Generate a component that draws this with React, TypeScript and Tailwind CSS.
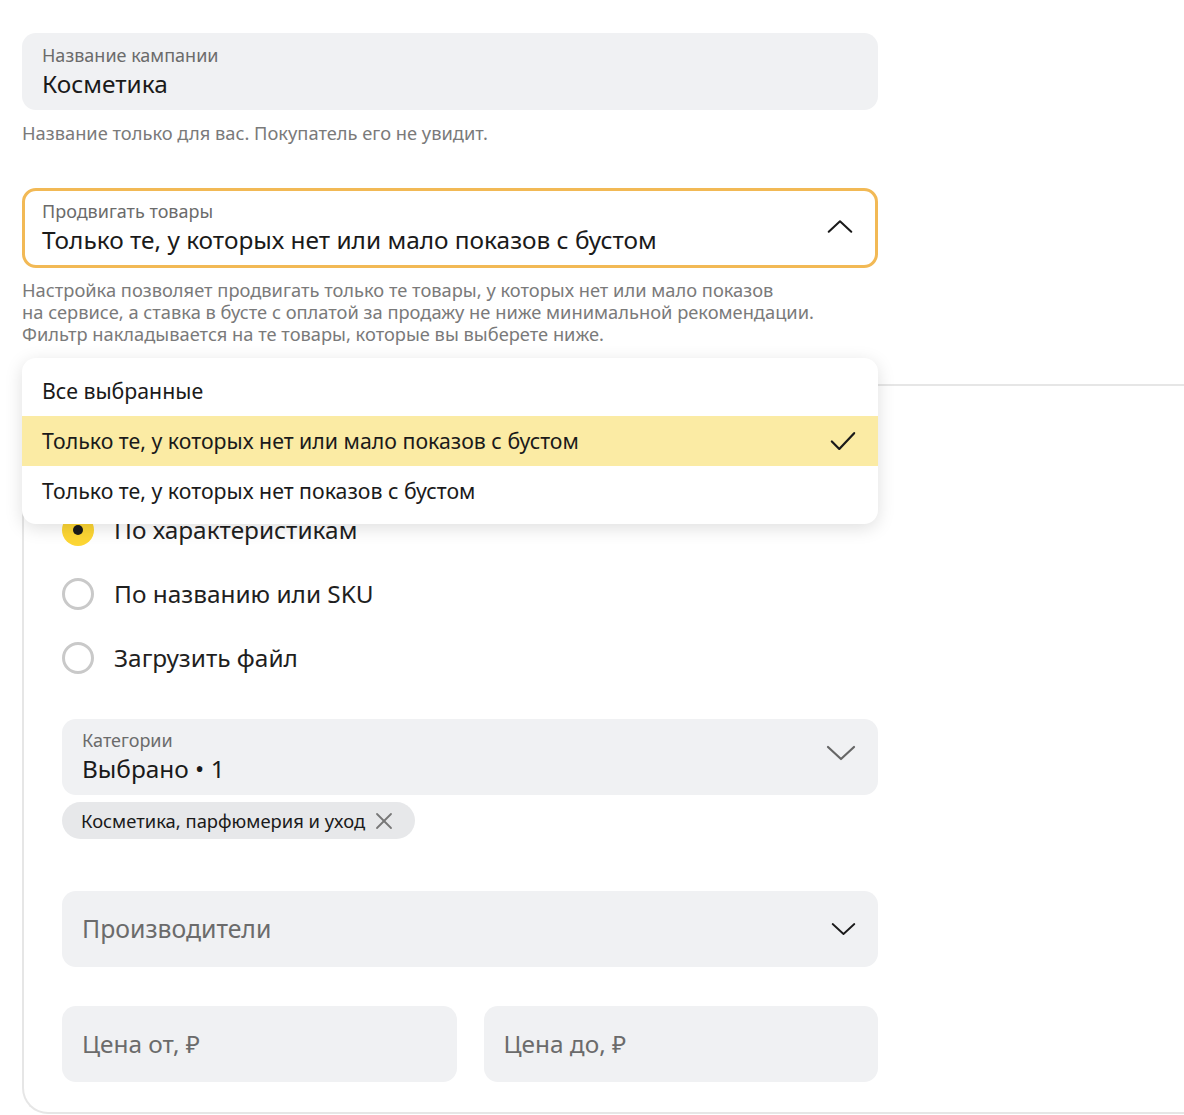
import React from "react";

const font = { fontFamily: '"Noto Sans", "Liberation Sans", sans-serif' };

function ChevronDown({ className }: { className?: string }) {
  return (
    <svg viewBox="0 0 30 16" className={className} fill="none" stroke="currentColor" strokeWidth="2.2" strokeLinecap="round" strokeLinejoin="round">
      <polyline points="2,2 15,14 28,2" />
    </svg>
  );
}

function ChevronUp({ className }: { className?: string }) {
  return (
    <svg viewBox="0 0 30 16" className={className} fill="none" stroke="currentColor" strokeWidth="2.4" strokeLinecap="round" strokeLinejoin="round">
      <polyline points="2,14 15,2 28,14" />
    </svg>
  );
}

function Check({ className }: { className?: string }) {
  return (
    <svg viewBox="0 0 28 22" className={className} fill="none" stroke="currentColor" strokeWidth="2.4" strokeLinecap="round" strokeLinejoin="round">
      <polyline points="2,11 10,19 26,2" />
    </svg>
  );
}

function Radio({ label, checked }: { label: string; checked?: boolean }) {
  return (
    <div className="flex h-8 items-center gap-[20px]">
      {checked ? (
        <span className="flex h-8 w-8 items-center justify-center rounded-full bg-[#fdd634]">
          <span className="h-[10px] w-[10px] rounded-full bg-[#1a1a1a]" />
        </span>
      ) : (
        <span className="h-8 w-8 rounded-full border-[3px] border-[#c9c9c9]" />
      )}
      <span className="text-[24.4px] leading-8 text-[#1f1f1f]">{label}</span>
    </div>
  );
}

export default function App() {
  return (
    <div className="relative h-[1115px] w-[1184px] overflow-hidden bg-white" style={font}>
      <div className="pl-[22px] pt-[33px]">
        <div className="w-[856px]">
          {/* campaign name */}
          <div className="flex h-[77px] flex-col justify-center rounded-[14px] bg-[#f0f1f3] px-[20px]">
            <div className="text-[18px] leading-[22px] text-[#6b6b6b]">Название кампании</div>
            <div className="mt-[2px] text-[24.4px] leading-[32px] text-[#1a1a1a]">Косметика</div>
          </div>
          <p className="mt-[12px] text-[18.3px] leading-[22px] text-[#7a7a7a]">
            Название только для вас. Покупатель его не увидит.
          </p>

          {/* promote select */}
          <div className="relative mt-[44px]">
            <div className="flex h-[80px] items-center justify-between rounded-[14px] border-[3px] border-[#f2b955] bg-white pl-[17px] pr-[22px]">
              <div className="flex flex-col">
                <div className="text-[18px] leading-[22px] text-[#6b6b6b]">Продвигать товары</div>
                <div className="mt-[2px] text-[24.4px] leading-[32px] text-[#1a1a1a]">
                  Только те, у которых нет или мало показов с бустом
                </div>
              </div>
              <ChevronUp className="mb-[4px] h-[15px] w-[26px] text-[#1a1a1a]" />
            </div>
            <p className="mt-[11px] text-[18.3px] leading-[22px] text-[#7a7a7a]">
              Настройка позволяет продвигать только те товары, у которых нет или мало показов
              <br />
              на сервисе, а ставка в бусте с оплатой за продажу не ниже минимальной рекомендации.
              <br />
              Фильтр накладывается на те товары, которые вы выберете ниже.
            </p>

            {/* open menu */}
            <div className="absolute left-0 top-[170px] z-10 w-[856px] rounded-[14px] bg-white py-[8px] shadow-[0_4px_18px_rgba(0,0,0,0.13)]">
              <div className="flex h-[50px] items-center px-[20px] text-[21.3px] text-[#1a1a1a]">Все выбранные</div>
              <div className="flex h-[50px] items-center justify-between bg-[#fbeba4] pl-[20px] pr-[22px] text-[21.3px] text-[#1a1a1a]">
                <span>Только те, у которых нет или мало показов с бустом</span>
                <Check className="h-[21px] w-[26px] text-[#1a1a1a]" />
              </div>
              <div className="flex h-[50px] items-center px-[20px] text-[21.3px] text-[#1a1a1a]">
                Только те, у которых нет показов с бустом
              </div>
            </div>
          </div>
        </div>

        {/* products card */}
        <div className="mt-[39px] w-[1300px] rounded-bl-[26px] rounded-tl-[26px] border-b-2 border-l-2 border-t-2 border-[#e6e6e6] pb-[30px] pl-[38px] pt-[128px]">
          <div className="w-[816px]">
            <div className="flex flex-col gap-[32px]">
              <Radio label="По характеристикам" checked />
              <Radio label="По названию или SKU" />
              <Radio label="Загрузить файл" />
            </div>

            <div className="mt-[45px] flex h-[76px] items-center justify-between rounded-[14px] bg-[#f0f1f3] pl-[20px] pr-[22px]">
              <div className="flex flex-col">
                <div className="text-[18px] leading-[22px] text-[#6b6b6b]">Категории</div>
                <div className="mt-[2px] text-[24.4px] leading-[32px] text-[#1a1a1a]">Выбрано • 1</div>
              </div>
              <ChevronDown className="mb-[8px] h-[16px] w-[30px] text-[#666]" />
            </div>

            <div className="mt-[7px] inline-flex h-[37px] items-center gap-[10px] rounded-full bg-[#e7e8ea] pl-[19px] pr-[22px]">
              <span className="text-[18.4px] text-[#1a1a1a]">Косметика, парфюмерия и уход</span>
              <svg viewBox="0 0 18 18" className="h-[18px] w-[18px] text-[#777]" fill="none" stroke="currentColor" strokeWidth="1.8" strokeLinecap="round">
                <line x1="2" y1="2" x2="16" y2="16" />
                <line x1="16" y1="2" x2="2" y2="16" />
              </svg>
            </div>

            <div className="mt-[52px] flex h-[76px] items-center justify-between rounded-[14px] bg-[#f0f1f3] pl-[20px] pr-[22px]">
              <span className="text-[24.8px] text-[#6b6b6b]">Производители</span>
              <ChevronDown className="h-[14px] w-[25px] text-[#1a1a1a]" />
            </div>

            <div className="mt-[39px] grid grid-cols-2 gap-[27px]">
              <div className="flex h-[76px] items-center rounded-[14px] bg-[#f0f1f3] px-[20px] text-[24.4px] text-[#6b6b6b]">
                Цена от, ₽
              </div>
              <div className="flex h-[76px] items-center rounded-[14px] bg-[#f0f1f3] px-[20px] text-[24.4px] text-[#6b6b6b]">
                Цена до, ₽
              </div>
            </div>
          </div>
        </div>
      </div>
    </div>
  );
}
